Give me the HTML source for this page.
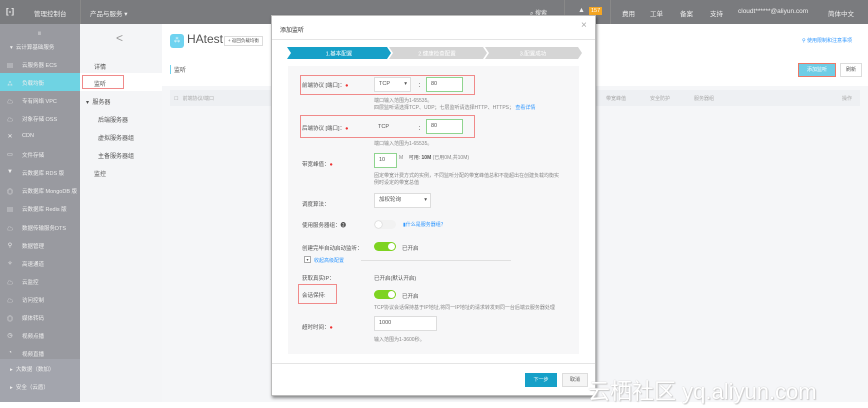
<!DOCTYPE html>
<html><head><meta charset="utf-8"><style>
*{margin:0;padding:0;box-sizing:border-box}
body{width:868px;height:408px;overflow:hidden;background:#fff;font-family:"Liberation Sans","Noto Sans CJK SC",sans-serif;font-size:6px;color:#555;position:relative}
.a{position:absolute;white-space:nowrap}
.top{left:0;top:0;width:868px;height:24px;background:#7a7b7e;color:#eee;font-size:6.5px}
.side{left:0;top:24px;width:80px;height:378px;background:#999aa0;color:#eee}
.side div{position:absolute;left:22px;font-size:5.5px}
.side div i{position:absolute;left:-16px;top:0;font-style:normal;font-size:6px;width:8px;text-align:center}
.nav2{left:80px;top:24px;width:82px;height:378px;background:#f4f5f7}
.main{left:162px;top:24px;width:706px;height:378px;background:#f5f6f8}
.modal{left:271px;top:15px;width:325px;height:381px;background:#fff;box-shadow:1px 2px 3px rgba(0,0,0,.45);border:1px solid #bbb}
.lbl{font-size:5.5px;color:#555}
.red{border:1px solid #f08a8a}
.inp{background:#fff;border:1px solid #ddd;font-size:5.5px;padding-left:4px;line-height:13px;height:15px}
.grn{border:1px solid #8fd48f}
.hint{font-size:5px;color:#888}
.tg{width:22px;height:9px;border-radius:5px;background:#7ed321}
.tg::after{content:"";position:absolute;right:1px;top:1px;width:7px;height:7px;border-radius:50%;background:#fff}
.tg.off{background:#f2f2f2}
.tg.off::after{left:1px;right:auto;box-shadow:0 0 1px #999}
</style></head><body>
<div class="a top">
 <div class="a" style="left:6px;top:7px;font-weight:bold;font-size:8px">[-]</div>
 <div class="a" style="left:34px;top:8px">管理控制台</div>
 <div class="a" style="left:80px;top:0;width:1px;height:24px;background:#888"></div>
 <div class="a" style="left:90px;top:8px">产品与服务 ▾</div>
 <div class="a" style="left:530px;top:8px;font-size:6px">⌕ 搜索</div>
 <div class="a" style="left:564px;top:0;width:1px;height:24px;background:#888"></div>
 <div class="a" style="left:610px;top:0;width:1px;height:24px;background:#888"></div>
 <div class="a" style="left:578px;top:7px;color:#eee;font-size:7px">▲</div>
 <div class="a" style="left:589px;top:7px;background:#f5a623;color:#fff;font-size:5.5px;padding:1px 2px">157</div>
 <div class="a" style="left:622px;top:8px">费用</div>
 <div class="a" style="left:650px;top:8px">工单</div>
 <div class="a" style="left:680px;top:8px">备案</div>
 <div class="a" style="left:710px;top:8px">支持</div>
 <div class="a" style="left:738px;top:8px">cloudt******@aliyun.com</div>
 <div class="a" style="left:828px;top:8px">简体中文</div>
</div>
<div class="a side">
 <div style="left:38px;top:6px;font-size:4px">|||</div>
 <div style="left:10px;top:19px">▾ &nbsp;云计算基础服务</div>
 <div style="left:0;top:49px;width:80px;height:18px;background:#6fd3e3"></div>
 <div style="top:37px"><i>▤</i>云服务器 ECS</div>
 <div style="top:55px"><i>⁂</i>负载均衡</div>
 <div style="top:73px"><i>☁</i>专有网络 VPC</div>
 <div style="top:91px"><i>☁</i>对象存储 OSS</div>
 <div style="top:109px"><i>✕</i>CDN</div>
 <div style="top:127px"><i>▭</i>文件存储</div>
 <div style="top:145px"><i>▼</i>云数据库 RDS 版</div>
 <div style="top:163px"><i>◎</i>云数据库 MongoDB 版</div>
 <div style="top:181px"><i>▤</i>云数据库 Redis 版</div>
 <div style="top:200px"><i>☁</i>数据传输服务DTS</div>
 <div style="top:218px"><i>⚲</i>数据管理</div>
 <div style="top:236px"><i>✧</i>高速通道</div>
 <div style="top:254px"><i>☁</i>云监控</div>
 <div style="top:272px"><i>☁</i>访问控制</div>
 <div style="top:290px"><i>◎</i>媒体转码</div>
 <div style="top:308px"><i>◷</i>视频点播</div>
 <div style="top:326px"><i>◔</i>视频直播</div>
 <div style="left:0;top:335px;width:80px;height:43px;background:#a3a5ad"></div>
 <div style="left:10px;top:341px">▸ &nbsp;大数据（数加）</div>
 <div style="left:10px;top:359px">▸ &nbsp;安全（云盾）</div>
</div>
<div class="a nav2">
 <div class="a" style="left:36px;top:7px;font-size:12px;color:#999">&lt;</div>
 <div class="a" style="left:0;top:49px;width:82px;height:18px;background:#fff"></div>
 <div class="a red" style="left:2px;top:51px;width:42px;height:14px"></div>
 <div class="a" style="left:14px;top:38px">详情</div>
 <div class="a" style="left:14px;top:55px">监听</div>
 <div class="a" style="left:6px;top:73px">▾ &nbsp;服务器</div>
 <div class="a" style="left:18px;top:91px">后端服务器</div>
 <div class="a" style="left:18px;top:109px">虚拟服务器组</div>
 <div class="a" style="left:18px;top:127px">主备服务器组</div>
 <div class="a" style="left:14px;top:145px">监控</div>
</div>
<div class="a main">
 <div class="a" style="left:0;top:0;width:706px;height:32px;background:#fff"></div>
 <div class="a" style="left:8px;top:10px;width:14px;height:14px;border-radius:3px;background:#6fd3f0;color:#fff;font-size:7px;text-align:center;line-height:14px">⁂</div>
 <div class="a" style="left:25px;top:8px;font-size:12px;color:#555">HAtest</div>
 <div class="a" style="left:62px;top:12px;border:1px solid #ddd;font-size:4.5px;padding:1px 3px;background:#fff">+ 返回负载均衡</div>
 <div class="a" style="left:0;top:32px;width:706px;height:30px;background:#fff"></div>
 <div class="a" style="left:8px;top:41px;border-left:1px solid #6fd3f0;padding-left:3px">监听</div>
 <div class="a" style="left:8px;top:66px;width:690px;height:16px;background:#eef0f3"></div>
 <div class="a" style="left:12px;top:71px;font-size:5px;color:#aaa">☐ &nbsp;&nbsp;前端协议/端口</div>
 <div class="a" style="left:444px;top:71px;font-size:5px;color:#aaa">带宽峰值</div>
 <div class="a" style="left:488px;top:71px;font-size:5px;color:#aaa">安全防护</div>
 <div class="a" style="left:532px;top:71px;font-size:5px;color:#aaa">服务器组</div>
 <div class="a" style="left:680px;top:71px;font-size:5px;color:#aaa">操作</div>
 <div class="a" style="left:640px;top:13px;font-size:5px;color:#39f">⚲ 使用限制和注意事项</div>
 <div class="a" style="left:636px;top:39px;width:38px;height:14px;background:#6fcde6;border:1px solid #e76;color:#fff;font-size:5px;text-align:center;line-height:12px">添加监听</div>
 <div class="a" style="left:678px;top:39px;width:22px;height:14px;border:1px solid #ddd;background:#fff;font-size:5px;text-align:center;line-height:12px">刷新</div>
</div>
<div class="a modal">
 <div class="a" style="left:8px;top:9px;font-size:6px;color:#333">添加监听</div>
 <div class="a" style="left:309px;top:4px;font-size:10px;color:#aaa">×</div>
 <div class="a" style="left:0;top:23px;width:323px;height:1px;background:#e5e5e5"></div>
 <svg class="a" style="left:15px;top:31px" width="295" height="12"><polygon points="0,0 100,0 104,6 100,12 0,12 4,6" fill="#16a0c8"/><polygon points="102,0 196,0 200,6 196,12 102,12 106,6" fill="#d5d5d5"/><polygon points="198,0 291,0 295,6 291,12 198,12 202,6" fill="#d5d5d5"/><text x="52" y="8.5" font-size="5.5" fill="#fff" text-anchor="middle" font-family="Liberation Sans,Noto Sans CJK SC,sans-serif">1.基本配置</text><text x="150" y="8.5" font-size="5.5" fill="#fff" text-anchor="middle" font-family="Liberation Sans,Noto Sans CJK SC,sans-serif">2.健康检查配置</text><text x="246" y="8.5" font-size="5.5" fill="#fff" text-anchor="middle" font-family="Liberation Sans,Noto Sans CJK SC,sans-serif">3.配置成功</text></svg>
 <div class="a" style="left:16px;top:50px;width:291px;height:288px;background:#f7f7f8"></div>
 <div class="a red" style="left:28px;top:59px;width:175px;height:20px"></div>
 <div class="a lbl" style="left:30px;top:65px">前端协议 [端口]：<span style="color:#e33">●</span></div>
 <div class="a inp" style="left:102px;top:61px;width:37px">TCP <span style="float:right;margin-right:3px">▾</span></div>
 <div class="a lbl" style="left:146px;top:65px">：</div>
 <div class="a inp grn" style="left:154px;top:61px;width:37px">80</div>
 <div class="a hint" style="left:102px;top:81px">端口输入范围为1-65535。</div>
 <div class="a hint" style="left:102px;top:88px">四层监听请选择TCP、UDP；七层监听请选择HTTP、HTTPS； <span style="color:#39f">查看详情</span></div>
 <div class="a red" style="left:28px;top:99px;width:175px;height:23px"></div>
 <div class="a lbl" style="left:30px;top:108px">后端协议 [端口]：<span style="color:#e33">●</span></div>
 <div class="a lbl" style="left:106px;top:108px">TCP</div>
 <div class="a lbl" style="left:146px;top:108px">：</div>
 <div class="a inp grn" style="left:154px;top:103px;width:37px">80</div>
 <div class="a hint" style="left:102px;top:124px">端口输入范围为1-65535。</div>
 <div class="a lbl" style="left:30px;top:144px">带宽峰值：<span style="color:#e33">●</span></div>
 <div class="a inp grn" style="left:102px;top:137px;width:23px">10</div>
 <div class="a hint" style="left:127px;top:138px">M &nbsp;&nbsp; <span style="color:#555">可用: <b>10M</b></span> (已用0M,共10M)</div>
 <div class="a hint" style="left:102px;top:156px">固定带宽计费方式的实例，不同监听分配的带宽峰值总和不能超出在创建负载均衡实</div>
 <div class="a hint" style="left:102px;top:163px">例时设定的带宽总值</div>
 <div class="a lbl" style="left:30px;top:184px">调度算法：</div>
 <div class="a inp" style="left:102px;top:177px;width:57px">加权轮询 <span style="float:right;margin-right:3px">▾</span></div>
 <div class="a lbl" style="left:30px;top:205px">使用服务器组：❷</div>
 <div class="a tg off" style="left:102px;top:204px"></div>
 <div class="a hint" style="left:131px;top:205px;color:#39f">▮什么是服务器组？</div>
 <div class="a lbl" style="left:30px;top:228px">创建完毕自动启动监听：</div>
 <div class="a tg" style="left:102px;top:226px"></div>
 <div class="a lbl" style="left:130px;top:228px">已开启</div>
 <div class="a" style="left:32px;top:240px;width:7px;height:7px;border:1px solid #aaa;background:#fff;font-size:4px;text-align:center;line-height:6px">▾</div>
 <div class="a hint" style="left:42px;top:241px;color:#39f">收起高级配置</div>
 <div class="a" style="left:89px;top:244px;width:150px;height:1px;background:#e0e0e0"></div>
 <div class="a lbl" style="left:30px;top:258px">获取真实IP：</div>
 <div class="a lbl" style="left:102px;top:258px">已开启(默认开启)</div>
 <div class="a red" style="left:26px;top:268px;width:39px;height:20px"></div>
 <div class="a lbl" style="left:30px;top:275px">会话保持:</div>
 <div class="a tg" style="left:102px;top:274px"></div>
 <div class="a lbl" style="left:130px;top:276px">已开启</div>
 <div class="a hint" style="left:102px;top:288px">TCP协议会话保持基于IP地址,将同一IP地址的请求转发到同一台后端云服务器处理</div>
 <div class="a lbl" style="left:30px;top:307px">超时时间：<span style="color:#e33">●</span></div>
 <div class="a inp" style="left:102px;top:300px;width:63px">1000</div>
 <div class="a hint" style="left:102px;top:320px">输入范围为1-3600秒。</div>
 <div class="a" style="left:0;top:347px;width:323px;height:1px;background:#e5e5e5"></div>
 <div class="a" style="left:253px;top:357px;width:32px;height:14px;background:#16a0c8;color:#fff;font-size:5px;text-align:center;line-height:14px">下一步</div>
 <div class="a" style="left:290px;top:357px;width:26px;height:14px;border:1px solid #ddd;background:#f5f5f5;font-size:5px;text-align:center;line-height:12px">取消</div>
</div>
<div class="a" style="left:588px;top:374px;font-size:22px;color:#fff;text-shadow:0 0 1px #bbb,1px 1px 1px #ccc;font-family:'Liberation Sans','Noto Sans CJK SC',sans-serif">云栖社区 yq.aliyun.com</div>
</body></html>
